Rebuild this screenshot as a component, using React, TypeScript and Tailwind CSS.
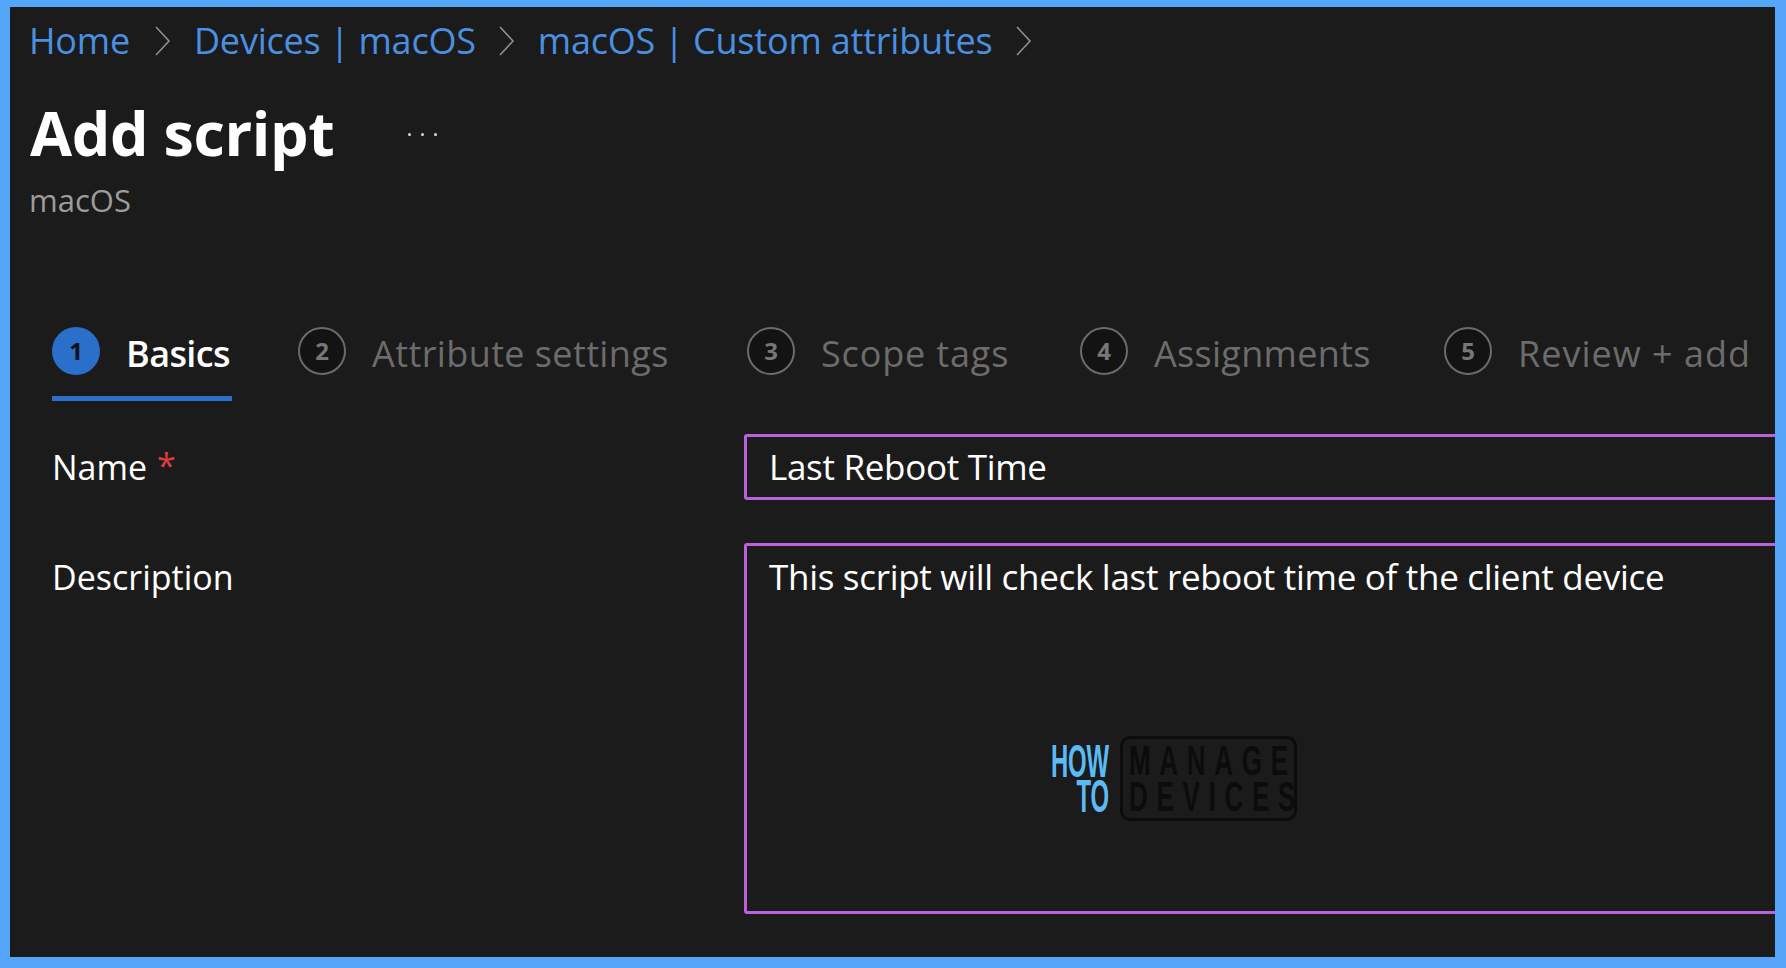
const font = { fontFamily: '"Open Sans", "Noto Sans", sans-serif' };

function Chevron({ className }: { className?: string }) {
  return (
    <svg width="17" height="32" viewBox="0 0 17 32" fill="none" className={className}>
      <polyline points="2,2 15,16 2,30" stroke="#8f8f8f" strokeWidth="1.6" />
    </svg>
  );
}

function Crumb({ label, className }: { label: string; className?: string }) {
  return (
    <span className={`text-[#4a90e2] text-[36px] leading-[40px] tracking-[-0.2px] whitespace-nowrap ${className ?? ""}`}>
      {label}
    </span>
  );
}

function Step({ n, label, active, className, labelClass }: { n: number; label: string; active?: boolean; className?: string; labelClass?: string }) {
  return (
    <div className={`flex items-start shrink-0 ${className ?? ""}`}>
      <div
        className={
          active
            ? "w-[48px] h-[48px] rounded-full bg-[#2a6fc9] flex items-center justify-center text-[#111] text-[24px] font-bold"
            : "w-[48px] h-[48px] rounded-full border-2 border-[#6b6b6b] bg-[#131313] flex items-center justify-center text-[#777] text-[24px] font-bold"
        }
      >
        {n}
      </div>
      <span
        className={
          active
            ? "ml-[2px] pl-[24px] text-white font-semibold text-[36px] leading-[48px] mt-[3px] tracking-[-0.6px] whitespace-nowrap"
            : `ml-[2px] pl-[24px] text-[#6c6c6c] text-[36px] leading-[48px] mt-[3px] whitespace-nowrap ${labelClass ?? ""}`
        }
      >
        {label}
      </span>
    </div>
  );
}

export default function App() {
  return (
    <div className="w-[1786px] h-[968px] bg-[#55a5f8] pt-[7px] pl-[10px] pr-[11px] pb-[11px]" style={font}>
      <div className="relative h-full bg-[#1b1b1b] overflow-hidden">
        {/* Breadcrumb */}
        <div className="flex items-center h-[40px] pl-[19px] mt-[14px]">
          <Crumb label="Home" />
          <Chevron className="ml-[24px]" />
          <Crumb label="Devices | macOS" className="ml-[23px]" />
          <Chevron className="ml-[22px]" />
          <Crumb label="macOS | Custom attributes" className="ml-[23px]" />
          <Chevron className="ml-[23px]" />
        </div>

        {/* Title */}
        <div className="flex items-center h-[72px] mt-[36px] pl-[20px]">
          <h1 className="text-white font-bold text-[61px] leading-[72px] tracking-[-0.4px] whitespace-nowrap">Add script</h1>
          <div className="flex gap-[10px] ml-[74px] mt-[2px]">
            <span className="w-[3px] h-[3px] rounded-full bg-[#d8d8d8]" />
            <span className="w-[3px] h-[3px] rounded-full bg-[#d8d8d8]" />
            <span className="w-[3px] h-[3px] rounded-full bg-[#d8d8d8]" />
          </div>
        </div>
        <div className="pl-[19px] mt-[9px] h-[44px] text-[#9c9c9c] text-[31px] leading-[44px]">macOS</div>

        {/* Wizard steps */}
        <div className="flex pl-[42px] mt-[105px] h-[74px]">
          <div className="w-[180px] h-[74px] border-b-[5px] border-[#2a6fc9] shrink-0">
            <Step n={1} label="Basics" active />
          </div>
          <Step n={2} label="Attribute settings" className="ml-[66px] w-[449px]" labelClass="tracking-[0.4px]" />
          <Step n={3} label="Scope tags" className="w-[333px]" labelClass="tracking-[0.85px]" />
          <Step n={4} label="Assignments" className="w-[364px]" labelClass="tracking-[0.3px]" />
          <Step n={5} label="Review + add" labelClass="tracking-[1px]" />
        </div>

        {/* Form */}
        <div className="grid grid-cols-[692px_1fr] pl-[42px] mt-[33px]">
          <div className="flex items-center h-[66px] text-white text-[34px]">
            Name <span className="text-[#e03b3b] ml-[10px] -mt-[4px]">*</span>
          </div>
          <div className="h-[66px] -mr-[6px] border-[3px] border-[#b962dc] rounded-[3px] flex items-center pl-[22px] text-white text-[35px] tracking-[-0.3px]">
            Last Reboot Time
          </div>
          <div className="mt-[43px] text-white text-[34px] leading-[44px] pt-[12px]">Description</div>
          <div className="relative mt-[43px] h-[371px] -mr-[6px] border-[3px] border-[#b962dc] rounded-[3px] pl-[22px] pt-[9px] text-white text-[35px] leading-[44px] tracking-[-0.3px] whitespace-nowrap">
            This script will check last reboot time of the client device
            {/* Watermark logo */}
            <div className="absolute left-[302px] top-[190px] flex items-center" style={{ fontFamily: '"Liberation Sans", sans-serif' }}>
              <div className="w-[114px] -ml-[54px] text-right text-[#5bbcf5] text-[46px] leading-[35px] font-bold origin-right scale-x-[0.52]">
                HOW
                <br />
                TO
              </div>
              <div className="ml-[11px] w-[177px] h-[85px] border-[3px] border-[#0c0c0c] rounded-[10px] pl-[6px] pt-[4px]">
                <div className="w-fit text-[#0c0c0c] text-[42px] leading-[36px] font-bold tracking-[14px] whitespace-nowrap origin-left scale-x-[0.62]">
                  MANAGE
                  <br />
                  DEVICES
                </div>
              </div>
            </div>
          </div>
        </div>
      </div>
    </div>
  );
}
